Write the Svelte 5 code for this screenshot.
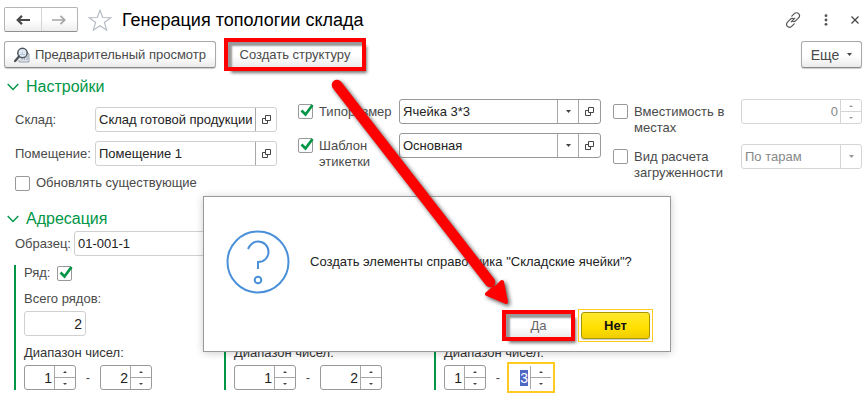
<script>
  import { onMount } from 'svelte';

  const racks = [
    { id: 'row', name: 'Ряд:', total: 'Всего рядов:', count: '2', from: '1', to: '2', size: 'small' },
    { id: 'rack', from: '1', to: '2', size: 'wide' },
    { id: 'tier', from: '1', to: '3', size: 'tiny' }
  ];

  onMount(() => {
    const input = document.getElementById('tier-to');
    input?.focus();
    input?.select();
  });
</script>

{#snippet openIcon()}
  <svg width="11" height="11" viewBox="0 0 11 11" fill="none" stroke="#444" aria-hidden="true">
    <path d="M4.5 1.500h5v5h-5zM4.500 4.500h-3v5h5v-3" />
  </svg>
{/snippet}

{#snippet tick(id, checked, label)}
  <span class="tick">
    <input type="checkbox" {id} {checked} aria-label={label} />
    <svg width="14" height="14" viewBox="0 0 14 14" fill="none" stroke="#009646" stroke-width="2.700" aria-hidden="true">
      <path d="M1.500 6.500l4 4L12.500 1" />
    </svg>
  </span>
{/snippet}

{#snippet spinner(id, value, size, label, disabled = false)}
  <span class="field spinner {size}" class:disabled>
    <input type="text" {id} {value} {disabled} aria-label={label} />
    <span class="steps">
      <button type="button" aria-label="Больше" {disabled}><svg width="4" height="2" viewBox="0 0 4 2"><path d="M0 2L2 0l2 2z" fill="currentColor" /></svg></button>
      <button type="button" aria-label="Меньше" {disabled}><svg width="4" height="2" viewBox="0 0 4 2"><path d="M0 0h4L2 2z" fill="currentColor" /></svg></button>
    </span>
  </span>
{/snippet}

{#snippet caret()}
  <span class="caret" aria-hidden="true"><svg width="5" height="3" viewBox="0 0 5 3"><path d="M0 0h5L2.5 3z" fill="currentColor" /></svg></span>
{/snippet}

{#snippet chevron()}
  <svg width="12" height="8" viewBox="0 0 12 8" fill="none" stroke="#009646" stroke-width="1.400" aria-hidden="true"><path d="M.7 1L6 6.500 11.300 1" /></svg>
{/snippet}

<main class="page">
  <header>
    <div class="nav">
      <button type="button" aria-label="Назад"><svg width="14" height="10" viewBox="0 0 14 10" fill="none" stroke="#4a4a4a" stroke-width="2.200"><path d="M14 5H2M6 .9L1.700 5 6 9.100" /></svg></button>
      <button type="button" aria-label="Вперед"><svg width="14" height="10" viewBox="0 0 14 10" fill="none" stroke="#a5a5a5" stroke-width="1.700"><path d="M0 5h12M8.500 .9L12.700 5 8.500 9.100" /></svg></button>
    </div>
    <button type="button" class="plain" aria-label="В избранное"><svg width="24" height="22" viewBox="0 0 24 22" fill="#fff" stroke="#b0b8c0" stroke-width="1.100"><path d="M12 1.200l2.700 7.300 8 .2-6.300 4.800 2.300 7.600L12 16.700l-6.700 4.400 2.300-7.600-6.300-4.800 8-.2z" /></svg></button>
    <h1>Генерация топологии склада</h1>
    <div class="window-tools">
      <button type="button" class="plain" aria-label="Ссылка"><svg width="16" height="16" viewBox="0 0 16 16" fill="none" stroke="#555" stroke-width="1.200" stroke-linecap="round"><path d="M6.800 4.200l2.300-2.300c1.500-1.500 3.300-1.500 4.500-.3s1.200 3-.3 4.500l-2.500 2.500c-1 1-2.300 1.200-3.300.6M9.200 11.800l-2.300 2.300c-1.500 1.500-3.300 1.500-4.500.3s-1.200-3 .3-4.500l2.500-2.500c1-1 2.300-1.200 3.300-.6M6.200 9.800l3.600-3.600" /></svg></button>
      <button type="button" class="plain" aria-label="Меню"><svg width="4" height="12" viewBox="0 0 4 12" fill="#555"><circle cx="2" cy="1.700" r="1.400" /><circle cx="2" cy="6" r="1.400" /><circle cx="2" cy="10.300" r="1.400" /></svg></button>
      <button type="button" class="plain" aria-label="Закрыть"><svg width="8" height="8" viewBox="0 0 8 8" fill="none" stroke="#444" stroke-width="1.200"><path d="M.5 .5l7 7M7.500 .5l-7 7" /></svg></button>
    </div>
  </header>

  <div class="toolbar">
    <button type="button" class="btn preview">
      <svg width="16" height="16" viewBox="0 0 16 16" aria-hidden="true">
        <path d="M11 5h2l2 2v8H5v-2" fill="#dce2e8" stroke="#98a2ac" />
        <circle cx="8.500" cy="6" r="4.700" fill="#dfe9f3" stroke="#4d5359" stroke-width="1.500" />
        <path d="M6 7.500h5M8.500 5v3" stroke="#b4c6d8" />
        <path d="M5 9.500L1.200 14" stroke="#4d5359" stroke-width="2.400" stroke-linecap="round" />
        <path d="M8 13v-1M10.500 13v-2M13 13V9" stroke="#9aa8b5" />
      </svg>
      Предварительный просмотр
    </button>
    <button type="button" class="btn create marked">Создать структуру</button>
    <button type="button" class="btn more">Еще {@render caret()}</button>
  </div>

  <section>
    <h2>{@render chevron()}Настройки</h2>
    <div class="settings">
      <div class="col places">
        <div class="row"><label for="store">Склад:</label>
          <span class="field"><input id="store" type="text" value="Склад готовой продукции" /><button type="button" class="open" aria-label="Открыть склад">{@render openIcon()}</button></span></div>
        <div class="row"><label for="room">Помещение:</label>
          <span class="field"><input id="room" type="text" value="Помещение 1" /><button type="button" class="open" aria-label="Открыть помещение">{@render openIcon()}</button></span></div>
        <div class="check">{@render tick('update', false)}<label for="update">Обновлять существующие</label></div>
      </div>

      <div class="col kinds">
        <div class="row">
          {@render tick('size-on', true)}<label for="size-on">Типоразмер</label>
          <span class="field dark"><select aria-label="Типоразмер"><option>Ячейка 3*3</option></select>{@render caret()}<button type="button" class="open" aria-label="Открыть типоразмер">{@render openIcon()}</button></span>
        </div>
        <div class="row">
          {@render tick('label-on', true)}<label for="label-on">Шаблон этикетки</label>
          <span class="field dark"><select aria-label="Шаблон этикетки"><option>Основная</option></select>{@render caret()}<button type="button" class="open" aria-label="Открыть шаблон">{@render openIcon()}</button></span>
        </div>
      </div>

      <div class="col limits">
        <div class="row">
          {@render tick('cap-on', false)}<label for="cap-on">Вместимость в местах</label>
          {@render spinner('capacity', '0', 'fill', 'Вместимость в местах', true)}
        </div>
        <div class="row">
          {@render tick('load-on', false)}<label for="load-on">Вид расчета загруженности</label>
          <span class="field disabled"><select disabled aria-label="Вид расчета загруженности"><option>По тарам</option></select>{@render caret()}</span>
        </div>
      </div>
    </div>
  </section>

  <section class="address">
    <h2>{@render chevron()}Адресация</h2>
    <div class="sample"><label for="sample">Образец:</label><span class="field"><input id="sample" type="text" value="01-001-1" /></span></div>
    <div class="racks">
      {#each racks as rack}
        <div class="rack">
          {#if rack.name}
            <div class="rack-name"><label for="{rack.id}-on">{rack.name}</label>{@render tick(`${rack.id}-on`, true)}</div>
            <label class="total" for="{rack.id}-total">{rack.total}</label>
            <span class="field count"><input id="{rack.id}-total" type="text" value={rack.count} /></span>
          {/if}
          <label class="range-label" for="{rack.id}-from">Диапазон чисел:</label>
          <div class="range">
            {@render spinner(`${rack.id}-from`, rack.from, rack.size, 'От')}
            <span class="dash">-</span>
            {@render spinner(`${rack.id}-to`, rack.to, rack.size, 'До')}
          </div>
        </div>
      {/each}
    </div>
  </section>

  <div class="dialog" role="dialog" aria-labelledby="question">
    <div class="message">
      <svg width="64" height="64" viewBox="0 0 64 64" fill="none" stroke="#4a90d9" stroke-width="2" aria-hidden="true">
        <circle cx="32" cy="32" r="30.500" />
        <path d="M22 19C24.500 13.500 28 11.500 32 11.500c6 0 10.500 4.500 10.500 10.200 0 6-4.500 10.300-10.500 10.300v7" />
        <circle cx="32" cy="50" r="3.300" />
      </svg>
      <p id="question">Создать элементы справочника "Складские ячейки"?</p>
    </div>
    <div class="answers">
      <button type="button" class="btn yes marked">Да</button>
      <span class="default"><button type="button" class="btn no">Нет</button></span>
    </div>
  </div>

  <svg class="arrow" width="190" height="240" viewBox="0 0 190 240" aria-hidden="true">
    <path d="M12 12L165 209" stroke="#f00" stroke-width="10.500" stroke-linecap="round" />
    <path d="M181 229l-19-8 7-6 3-1 5-5z" fill="#f00" stroke="#f00" stroke-width="4" stroke-linejoin="round" />
  </svg>
</main>

<style>
  :global(body) { margin: 0; background: #fff; }
  .page {
    position: relative;
    overflow: hidden;
    padding: 7px 6px 8px 4px;
    font: 13px/16px "Liberation Sans", Arial, sans-serif;
    color: #4a4a4a;
  }
  .page * { box-sizing: border-box; }
  button, input, select { margin: 0; font: inherit; color: inherit; }
  button { padding: 0; border: 0; background: none; display: flex; align-items: center; justify-content: center; }
  svg { display: block; flex: none; }
  header { display: flex; align-items: center; height: 25px; }
  .nav { display: flex; width: 74px; height: 25px; border: 1px solid #b5b5b5; border-bottom-color: #8f8f8f; border-radius: 2px; background: linear-gradient(#fff 50%, #ededed); }
  .nav button { flex: 1; }
  .nav button + button { border-left: 1px solid #d5d5d5; }
  .nav + .plain { margin: 0 10px; }
  h1 { margin: 0; font-size: 18px; line-height: 24px; font-weight: 400; color: #000; }
  .window-tools { display: flex; align-items: center; margin-left: auto; gap: 23px; padding-right: 3px; }

  .toolbar { display: flex; margin-top: 9px; gap: 11px; }
  .btn { height: 27px; border: 1px solid #a9a9a9; border-bottom-color: #888; border-radius: 3px; background: linear-gradient(#fff 55%, #ebebeb); box-shadow: 0 1px 1px #ccc; }
  .preview { width: 212px; gap: 5px; }
  .create { width: 136px; }
  .more { width: 61px; margin-left: auto; gap: 8px; font-size: 14px; }
  .more .caret { width: auto; border: 0; }
  .marked { border-color: #ccc; border-radius: 0; outline: 4px solid #f00; outline-offset: -1px; box-shadow: 4px 5px 3px #777, inset 4px 4px 2px #999; }

  h2 { display: flex; align-items: center; gap: 7px; margin: 0; padding-left: 3px; font-size: 16px; line-height: 20px; font-weight: 400; color: #009646; }
  section { margin-top: 9px; }
  .settings { display: grid; grid-template-columns: minmax(0, 283fr) minmax(0, 315fr) minmax(0, 249fr); padding-left: 11px; }
  .col { display: flex; flex-direction: column; gap: 9px; padding-top: 2px; }
  .places { padding: 10px 21px 0 0; }
  .kinds { padding-right: 12px; }
  .limits { gap: 13px; }
  .row { display: flex; align-items: flex-start; min-height: 25px; }
  .row label { padding-top: 5px; }
  .places .row label { width: 80px; flex: none; }
  .tick + label { margin-left: 6px; }
  .kinds .row { height: 25px; }
  .kinds .row label { width: 80px; flex: none; }
  .kinds .row .tick, .limits .row .tick { margin-top: 5px; }
  .limits .row { height: 32px; }
  .limits .row label { width: 107px; flex: none; }
  .limits .field { flex: 1; }
  .check { display: flex; align-items: center; }

  .field { display: flex; flex: 1; min-width: 0; height: 25px; border: 1px solid #d0d0d0; border-radius: 3px; background: #fff; color: #222; overflow: hidden; }
  .field input, .field select { flex: 1; width: 0; min-width: 0; padding: 0 3px; border: 0; outline: 0; background: transparent; opacity: 1; appearance: none; }
  .dark, .spinner { border-color: #999; }
  .disabled { border-color: #d5d5d5; color: #888; }
  .open { width: 21px; border-left: 1px solid #a8a8a8; }
  .dark .open { width: 22px; }
  .caret { display: flex; align-items: center; justify-content: center; width: 21px; flex: none; border-left: 1px solid #a8a8a8; color: #444; pointer-events: none; }
  .disabled .caret { border-color: #d5d5d5; color: #999; }
  .field select { margin-right: -21px; }

  .tick { position: relative; width: 15px; height: 15px; flex: none; }
  .tick input { display: block; width: 15px; height: 15px; margin: 0; appearance: none; border: 1px solid #999; border-radius: 2px; background: #fff; }
  .tick svg { display: none; position: absolute; left: 2px; top: 0; pointer-events: none; }
  .tick input:checked + svg { display: block; }

  .spinner input { text-align: right; padding: 0 2px; }
  .racks .field { font-size: 14px; }
  .steps { display: flex; flex-direction: column; width: 21px; flex: none; border-left: 1px solid #a8a8a8; }
  .steps button { flex: 1; color: #444; }
  .steps button + button { border-top: 1px solid #a8a8a8; }
  .disabled .steps, .disabled .steps button { border-color: #d5d5d5; color: #999; }

  .address { margin-top: 18px; }
  .sample { display: flex; padding: 2px 0 0 11px; }
  .sample label { width: 59px; padding-top: 5px; }
  .sample .field { flex: 0 1 400px; }
  .racks { display: flex; padding: 9px 0 0 10px; }
  .rack { display: flex; flex-direction: column; justify-content: flex-end; width: 210px; height: 125px; padding-left: 8px; border-left: 2px solid #009646; }
  .rack-name { display: flex; align-items: center; gap: 7px; height: 16px; }
  .total { margin-top: 10px; }
  .count { flex: none; width: 62px; margin-top: 4px; }
  .count input { text-align: right; }
  .range-label { margin-top: 9px; color: #333; }
  .range { display: flex; align-items: center; margin-top: 4px; }
  .dash { width: 24px; text-align: center; }
  .spinner.small { flex: none; width: 52px; }
  .spinner.wide { flex: none; width: 62px; }
  .spinner.tiny { flex: none; width: 42px; }
  .spinner:focus-within { width: 48px; height: 31px; margin: -3px; padding: 2px; border: 2px solid #ffcb20; border-radius: 0; }
  .spinner input::selection { background: #4f68c4; color: #fff; }

  .dialog { position: absolute; left: 203px; top: 196px; width: 468px; height: 156px; display: flex; flex-direction: column; justify-content: space-between; border: 1px solid #999; background: #fff; box-shadow: 0 1px 8px rgba(0, 0, 0, .2); color: #222; }
  .message { display: flex; align-items: center; gap: 20px; padding: 33px 22px 0; }
  .message p { margin: 0; }
  .answers { display: flex; align-items: center; justify-content: flex-end; gap: 6px; padding: 0 17px 9px 0; }
  .yes { width: 67px; height: 25px; color: #666; }
  .default { padding: 2px; border: 1px solid #ffcb20; }
  .no { width: 69px; border-color: #a89600; background: linear-gradient(#ffe92e, #ffdf00 60%, #efcd00); color: #111; font-weight: 700; }
  .arrow { position: absolute; left: 325px; top: 73px; pointer-events: none; filter: drop-shadow(2px 2px 2px #555); }
</style>
